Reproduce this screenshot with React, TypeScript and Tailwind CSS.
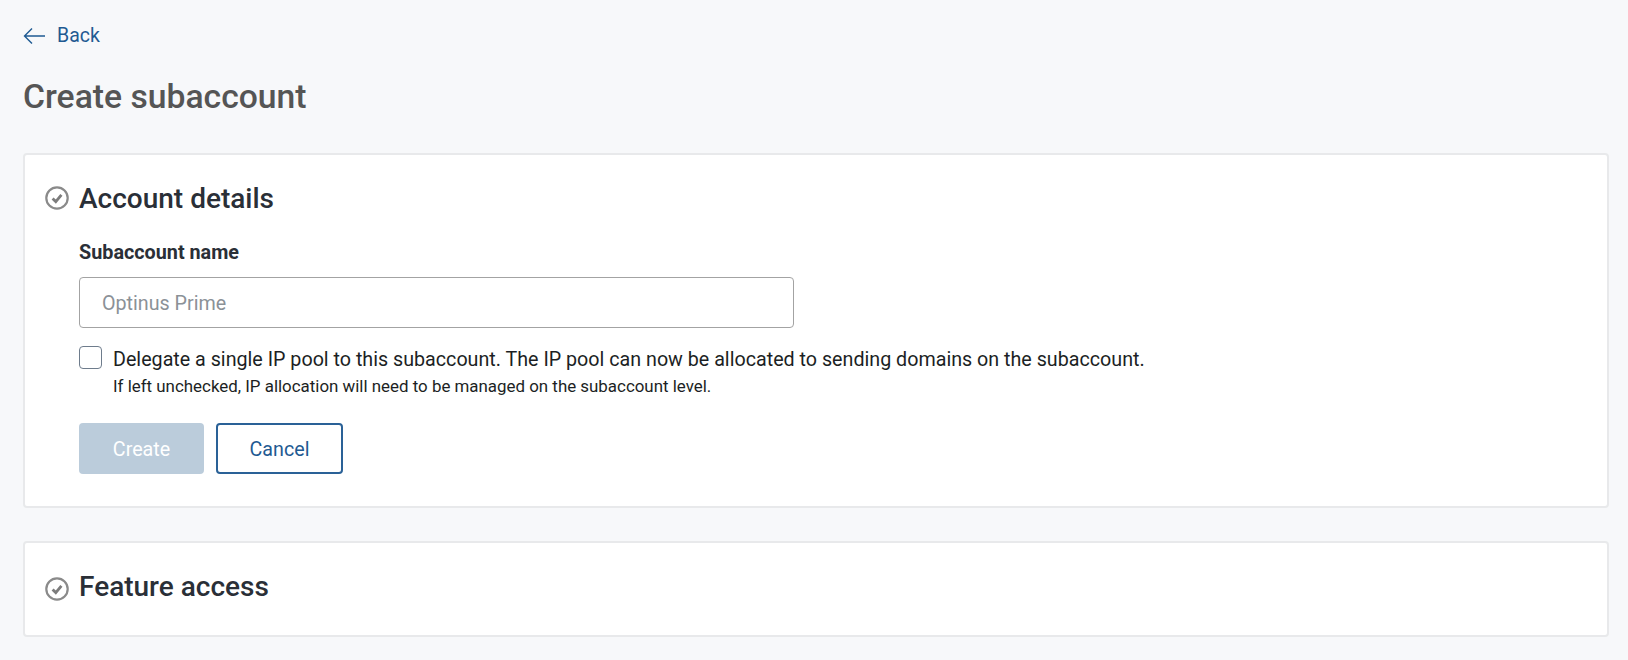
function CheckCircle({ className }: { className: string }) {
  return (
    <svg width="24" height="24" viewBox="0 0 24 24" fill="none" className={className}>
      <circle cx="12" cy="12" r="10.7" stroke="#8a8a8a" strokeWidth="2.2" />
      <path d="M7.6 12.4l3.2 3.2 5.6-6.8" stroke="#7c7c7c" strokeWidth="2.8" />
    </svg>
  );
}

export default function App() {
  return (
    <div className="min-h-[660px] bg-[#f7f8fa] pl-[23px] pr-[19px] pt-[24px] font-['Roboto',sans-serif]">
      <a className="flex items-center gap-[11px] h-[24px] text-[19.5px] text-[#1f5a92]">
        <svg width="23" height="18" viewBox="0 0 23 18" fill="none">
          <path d="M22 9H1.5M9 1.5L1.5 9 9 16.5" stroke="#1f5a92" strokeWidth="1.4" />
        </svg>
        Back
      </a>
      <h1 className="mt-[29px] text-[33.7px] leading-[40px] font-medium text-[#555555]">
        Create subaccount
      </h1>

      <div className="mt-[36px] h-[355px] rounded-[4px] border-2 border-[#e8e9eb] bg-white pl-[20px] pt-[26px]">
        <div className="flex items-center gap-[10px]">
          <CheckCircle className="shrink-0 -translate-y-[1px]" />
          <h2 className="text-[28px] leading-[36px] font-medium text-[#2a2f37]">Account details</h2>
        </div>
        <div className="pl-[34px]">
          <label className="block mt-[24px] text-[19.8px] leading-[24px] font-bold text-[#2a2f37]">
            Subaccount name
          </label>
          <input
            placeholder="Optinus Prime"
            className="mt-[12px] block w-[715px] h-[51px] rounded-[4px] border-[1.5px] border-[#a3a3a3] bg-white px-[22px] pt-[2px] text-[19.7px] placeholder:text-[#8b9197] outline-none"
          />
          <div className="mt-[18px] flex gap-[11px]">
            <div className="size-[23px] shrink-0 rounded-[4px] border-[1.5px] border-[#6e7c8c] bg-white" />
            <div>
              <div className="mt-[2px] text-[19.7px] leading-[24px] text-[#1c1f24]">
                Delegate a single IP pool to this subaccount. The IP pool can now be allocated to sending domains on the subaccount.
              </div>
              <div className="mt-[4px] text-[16.9px] leading-[20px] text-[#1c1f24]">
                If left unchecked, IP allocation will need to be managed on the subaccount level.
              </div>
            </div>
          </div>
          <div className="mt-[27px] flex gap-[12px]">
            <button className="w-[125px] h-[51px] rounded-[4px] bg-[#bbccdb] pt-[2px] text-[19.7px] text-white">Create</button>
            <button className="w-[127px] h-[51px] rounded-[4px] border-2 border-[#2a6197] bg-white pt-[2px] text-[19.7px] text-[#1f5a92]">
              Cancel
            </button>
          </div>
        </div>
      </div>

      <div className="mt-[33px] h-[96px] rounded-[4px] border-2 border-[#e8e9eb] bg-white pl-[20px] pt-[26px]">
        <div className="flex items-center gap-[10px]">
          <CheckCircle className="shrink-0 translate-y-[2px]" />
          <h2 className="text-[28px] leading-[36px] font-medium text-[#2a2f37]">Feature access</h2>
        </div>
      </div>
    </div>
  );
}
